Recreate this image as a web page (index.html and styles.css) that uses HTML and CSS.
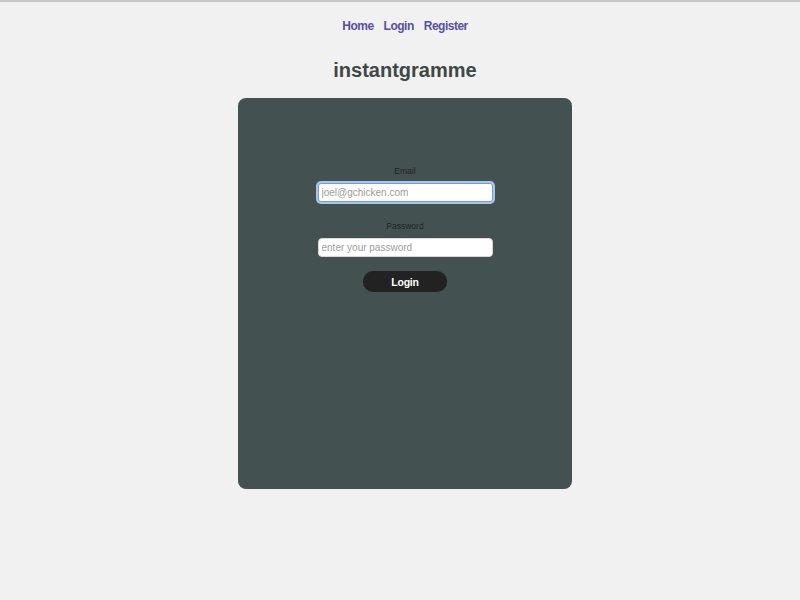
FILE: index.html
```html
<!DOCTYPE html>
<html>
<head>
<meta charset="utf-8">
<title>instantgramme</title>
<link rel="stylesheet" href="styles.css">
</head>
<body>
<div class="page">
  <nav class="nav">
    <a href="#">Home</a>
    <a href="#">Login</a>
    <a href="#">Register</a>
  </nav>
  <h1 class="title">instantgramme</h1>
  <main class="card">
    <form class="form">
      <label class="label" for="email">Email</label>
      <input class="input focused" id="email" type="text" placeholder="joel@gchicken.com">
      <label class="label label-pw" for="pw">Password</label>
      <input class="input" id="pw" type="password" placeholder="enter your password">
      <button class="btn" type="button">Login</button>
    </form>
  </main>
</div>
</body>
</html>
```

FILE: styles.css
```css
html, body {
  margin: 0;
  padding: 0;
  background: #f1f1f1;
}
body {
  border-top: 2px solid #c6c6c6;
  font-family: "Liberation Sans", Arial, sans-serif;
}
.page {
  width: 800px;
  padding-left: 10px;
  box-sizing: border-box;
  display: flex;
  flex-direction: column;
  align-items: center;
}
.nav {
  display: flex;
  gap: 10px;
  padding-top: 16px;
  height: 16px;
}
.nav a {
  color: #5a4ea6;
  font-weight: bold;
  font-size: 12px;
  letter-spacing: -0.5px;
  text-decoration: none;
  line-height: 16px;
}
.title {
  margin: 0;
  margin-top: 23px;
  font-size: 20px;
  line-height: 26px;
  color: #3e4847;
  font-weight: bold;
}
.card {
  margin-top: 15px;
  width: 334px;
  height: 391px;
  background: #435150;
  border-radius: 8px;
  box-sizing: border-box;
  padding-top: 67px;
}
.form {
  display: flex;
  flex-direction: column;
  align-items: center;
}
.label {
  font-size: 8.5px;
  color: #1e2424;
  line-height: 12px;
  margin-bottom: 6px;
}
.input {
  width: 175px;
  height: 19px;
  box-sizing: border-box;
  border: 1px solid #d8d8d8;
  border-radius: 4px;
  background: #fff;
  padding: 0 3px;
  font-family: "Liberation Sans", Arial, sans-serif;
  font-size: 10px;
  margin: 0 0 18px 0;
  outline: none;
}
.input::placeholder {
  color: #9c9c9c;
}
.input.focused {
  border: 1px solid #6f9fd8;
  box-shadow: 0 0 0 2px #a9c6ea;
  border-radius: 3px;
}
#pw {
  margin-bottom: 14px;
}
.btn {
  width: 84px;
  height: 21px;
  border: none;
  border-radius: 10px;
  background: #222222;
  color: #fff;
  font-family: "Liberation Sans", Arial, sans-serif;
  font-weight: bold;
  font-size: 10.5px;
  letter-spacing: -0.2px;
  cursor: pointer;
}
```
